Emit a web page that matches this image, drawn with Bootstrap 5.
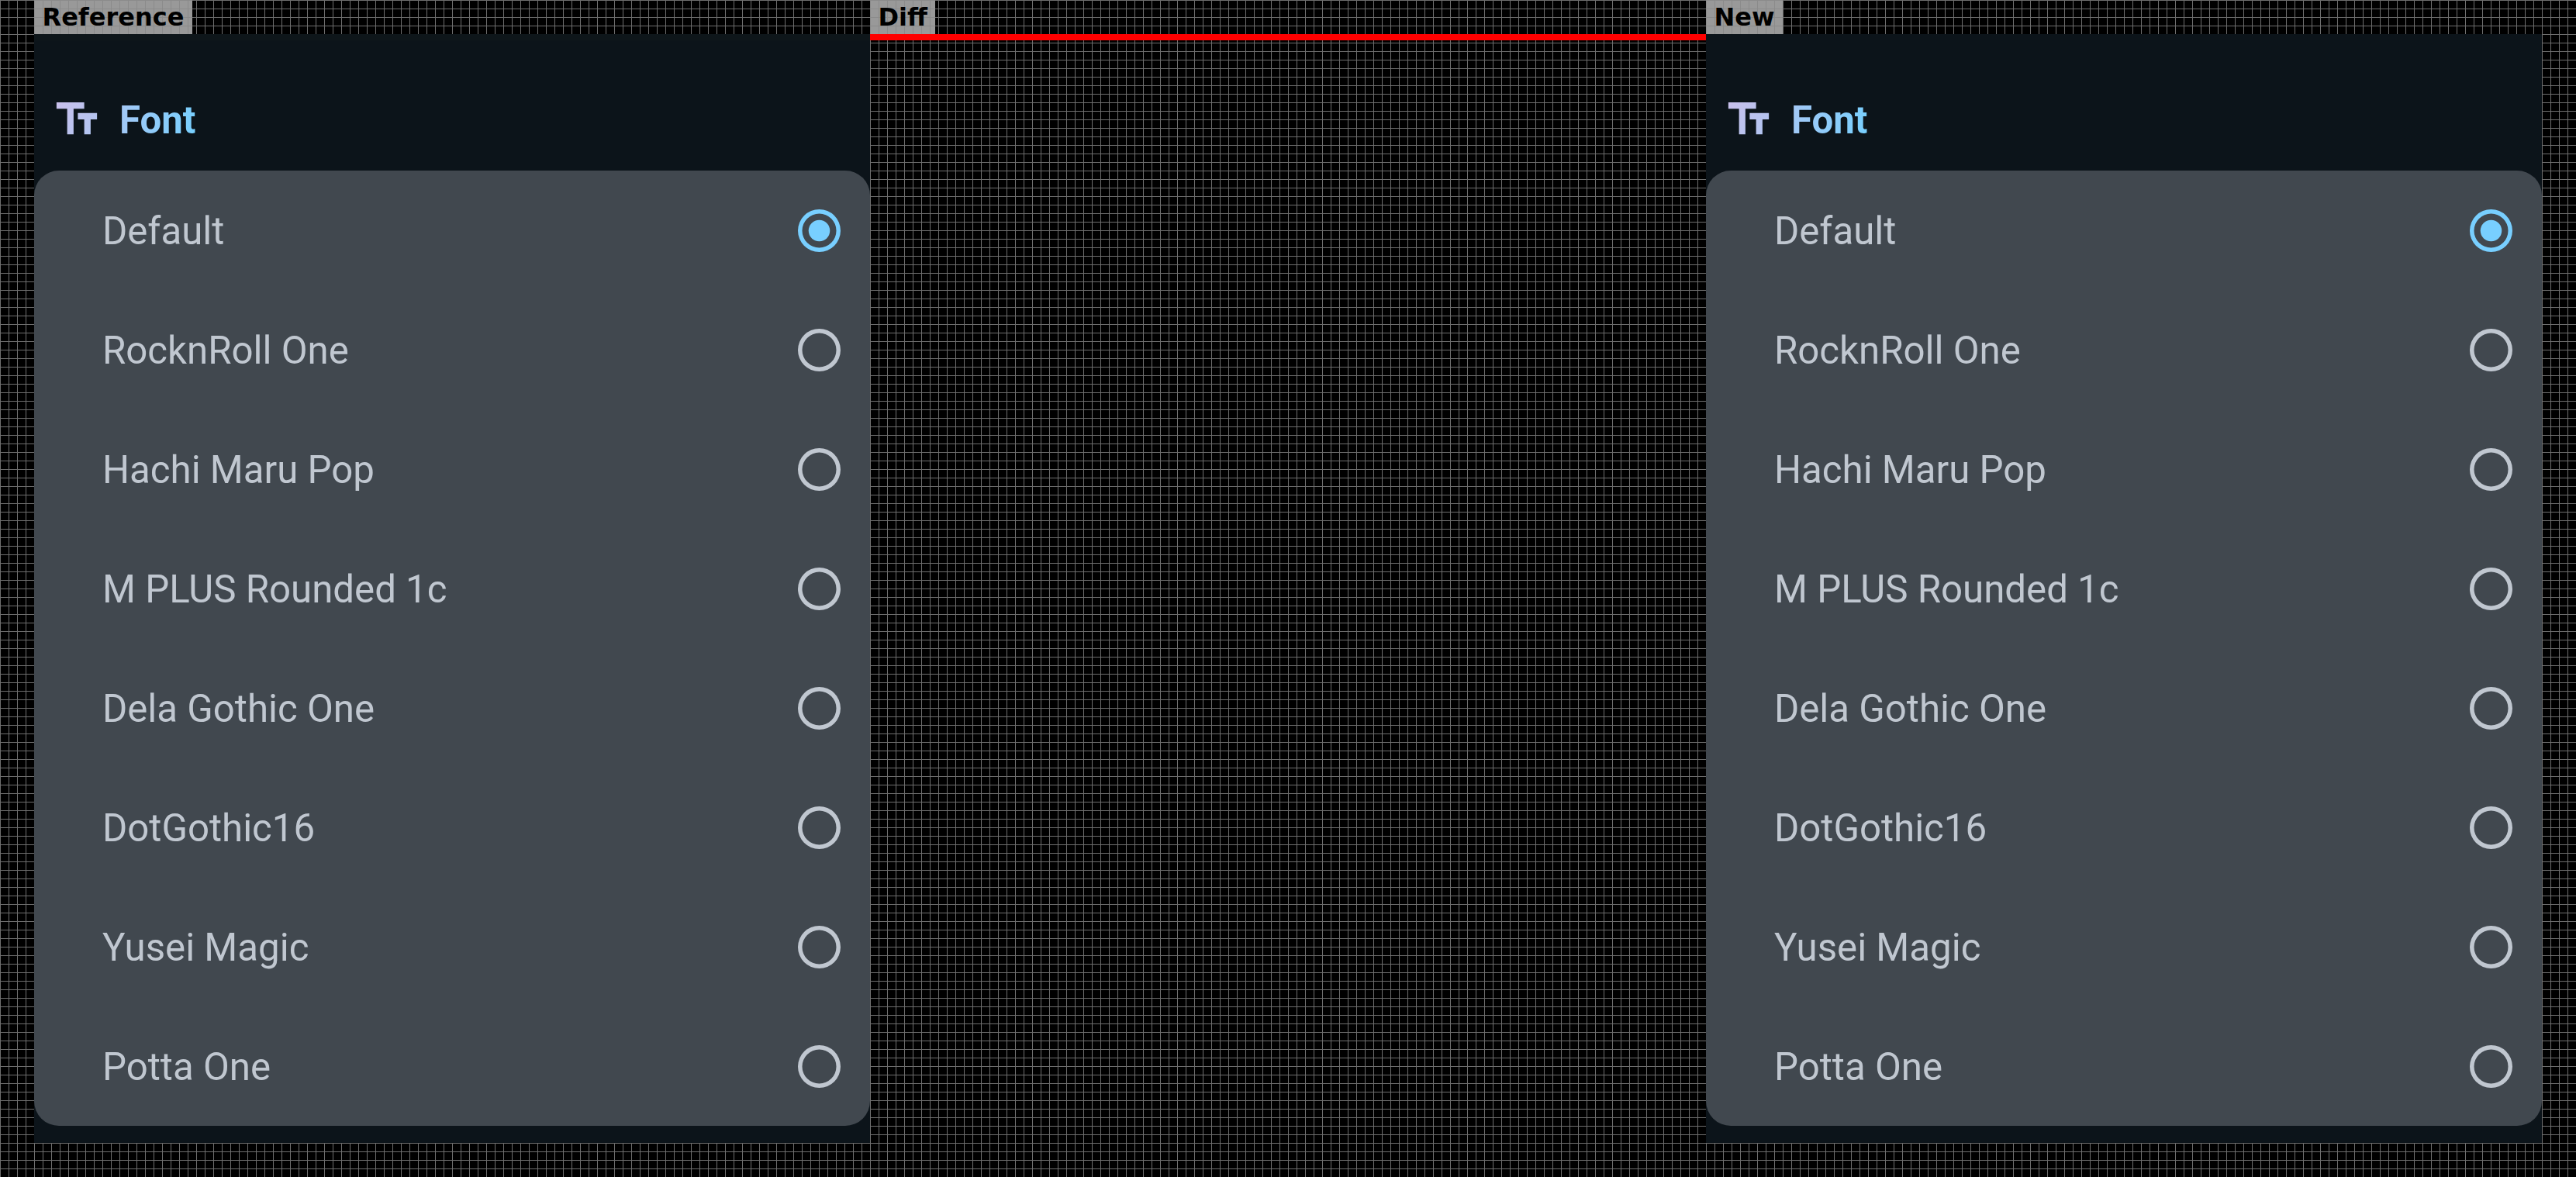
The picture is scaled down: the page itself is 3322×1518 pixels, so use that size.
<!DOCTYPE html>
<html lang="en">
<head>
    <meta charset="UTF-8">
    <meta name="viewport" content="width=device-width, initial-scale=1.0">
    <title>Font settings comparison</title>
    <link href="https://cdn.jsdelivr.net/npm/bootstrap@5.3.3/dist/css/bootstrap.min.css" rel="stylesheet">
    <style>
        /* 11px grid behind everything */
        body {
            background-color: #000;
            background-image:
                linear-gradient(to right, #6e6e6e 1px, transparent 1px),
                linear-gradient(to bottom, #6e6e6e 1px, transparent 1px);
            background-size: 11px 11px;
            min-height: 1518px;
            overflow: hidden;
        }
        .compare-wrap {
            padding: 0 44px;
        }
        .compare-col {
            width: 1078px;
            height: 1474px;
        }
        .tag-label {
            height: 44px;
            padding: 0 10.5px;
            color: #000;
            font-family: "DejaVu Sans", sans-serif;
            font-weight: 700;
            font-size: 32px;
            line-height: 44px;
            background-color: #999;
            background-image:
                linear-gradient(to right, #8b8b8b 1px, transparent 1px),
                linear-gradient(to bottom, #8b8b8b 1px, transparent 1px);
            background-size: 11px 11px;
        }
        .diff-bar {
            height: 8px;
            background: #f00;
        }
        .phone-panel {
            background: #0c141a;
            padding-top: 77px;
            font-family: Roboto, sans-serif;
        }
        .panel-strip {
            border-top: 8px solid #0e161a;
            padding-top: 69px;
        }
        .panel-title {
            height: 66px;
            margin: 0 0 33px 22px;
            gap: 22px;
        }
        .title-icon {
            width: 66px;
            height: 66px;
        }
        .title-text {
            font-size: 49.2px;
            font-weight: 700;
            line-height: 66px;
            padding-top: 2px;
            background: linear-gradient(100deg, #a6c8f5, #76cffe);
            -webkit-background-clip: text;
            background-clip: text;
            color: transparent;
        }
        .font-list {
            height: 1232px;
            background: #41484f;
            border-radius: 32px;
            overflow: hidden;
        }
        .font-row {
            height: 154px;
            padding: 0 38px 0 88px;
            color: #c0c7d0;
            font-size: 49.2px;
        }
        .font-name {
            padding-top: 3px;
        }
        /* ring is an inset shadow: browsers floor a 5.5px border to 5px */
        .font-radio.form-check-input {
            width: 55px;
            height: 55px;
            margin: 0;
            flex-shrink: 0;
            background-color: transparent;
            border: 0;
            box-shadow: inset 0 0 0 5.5px #c0c7d0;
        }
        .font-radio.form-check-input:checked {
            background-color: transparent;
            box-shadow: inset 0 0 0 5.5px #78cfff;
            --bs-form-check-bg-image: url("data:image/svg+xml,%3csvg xmlns='http://www.w3.org/2000/svg' viewBox='0 0 55 55'%3e%3ccircle cx='27.5' cy='27.5' r='13.75' fill='%2378cfff'/%3e%3c/svg%3e");
        }
    </style>
</head>
<body>
    <div class="compare-wrap d-flex">
        <!-- Reference -->
        <div class="compare-col d-flex flex-column">
            <div class="tag-label align-self-start">Reference</div>
            <div class="phone-panel panel-strip flex-grow-1">
                <div class="panel-title d-flex align-items-center">
                    <svg class="title-icon" viewBox="0 0 24 24">
                        <defs>
                            <linearGradient id="iconFillA" x1="2.5" y1="4" x2="21.5" y2="19" gradientUnits="userSpaceOnUse">
                                <stop offset="0" stop-color="#c9c0ec"/>
                                <stop offset="1" stop-color="#b0c5f1"/>
                            </linearGradient>
                        </defs>
                        <path fill="url(#iconFillA)" d="M2.5 4v3h5v12h3V7h5V4h-13zm19 5h-9v3h3v7h3v-7h3V9z"/>
                    </svg>
                    <span class="title-text">Font</span>
                </div>
                <div class="font-list">
                    <label class="font-row d-flex align-items-center justify-content-between"><span class="font-name">Default</span><input class="form-check-input font-radio" type="radio" name="fontA" checked></label>
                    <label class="font-row d-flex align-items-center justify-content-between"><span class="font-name">RocknRoll One</span><input class="form-check-input font-radio" type="radio" name="fontA"></label>
                    <label class="font-row d-flex align-items-center justify-content-between"><span class="font-name">Hachi Maru Pop</span><input class="form-check-input font-radio" type="radio" name="fontA"></label>
                    <label class="font-row d-flex align-items-center justify-content-between"><span class="font-name">M PLUS Rounded 1c</span><input class="form-check-input font-radio" type="radio" name="fontA"></label>
                    <label class="font-row d-flex align-items-center justify-content-between"><span class="font-name">Dela Gothic One</span><input class="form-check-input font-radio" type="radio" name="fontA"></label>
                    <label class="font-row d-flex align-items-center justify-content-between"><span class="font-name">DotGothic16</span><input class="form-check-input font-radio" type="radio" name="fontA"></label>
                    <label class="font-row d-flex align-items-center justify-content-between"><span class="font-name">Yusei Magic</span><input class="form-check-input font-radio" type="radio" name="fontA"></label>
                    <label class="font-row d-flex align-items-center justify-content-between"><span class="font-name">Potta One</span><input class="form-check-input font-radio" type="radio" name="fontA"></label>
                </div>
            </div>
        </div>

        <!-- Diff -->
        <div class="compare-col d-flex flex-column">
            <div class="tag-label align-self-start">Diff</div>
            <div class="diff-bar"></div>
        </div>

        <!-- New -->
        <div class="compare-col d-flex flex-column">
            <div class="tag-label align-self-start">New</div>
            <div class="phone-panel flex-grow-1">
                <div class="panel-title d-flex align-items-center">
                    <svg class="title-icon" viewBox="0 0 24 24">
                        <defs>
                            <linearGradient id="iconFillB" x1="2.5" y1="4" x2="21.5" y2="19" gradientUnits="userSpaceOnUse">
                                <stop offset="0" stop-color="#c9c0ec"/>
                                <stop offset="1" stop-color="#b0c5f1"/>
                            </linearGradient>
                        </defs>
                        <path fill="url(#iconFillB)" d="M2.5 4v3h5v12h3V7h5V4h-13zm19 5h-9v3h3v7h3v-7h3V9z"/>
                    </svg>
                    <span class="title-text">Font</span>
                </div>
                <div class="font-list">
                    <label class="font-row d-flex align-items-center justify-content-between"><span class="font-name">Default</span><input class="form-check-input font-radio" type="radio" name="fontB" checked></label>
                    <label class="font-row d-flex align-items-center justify-content-between"><span class="font-name">RocknRoll One</span><input class="form-check-input font-radio" type="radio" name="fontB"></label>
                    <label class="font-row d-flex align-items-center justify-content-between"><span class="font-name">Hachi Maru Pop</span><input class="form-check-input font-radio" type="radio" name="fontB"></label>
                    <label class="font-row d-flex align-items-center justify-content-between"><span class="font-name">M PLUS Rounded 1c</span><input class="form-check-input font-radio" type="radio" name="fontB"></label>
                    <label class="font-row d-flex align-items-center justify-content-between"><span class="font-name">Dela Gothic One</span><input class="form-check-input font-radio" type="radio" name="fontB"></label>
                    <label class="font-row d-flex align-items-center justify-content-between"><span class="font-name">DotGothic16</span><input class="form-check-input font-radio" type="radio" name="fontB"></label>
                    <label class="font-row d-flex align-items-center justify-content-between"><span class="font-name">Yusei Magic</span><input class="form-check-input font-radio" type="radio" name="fontB"></label>
                    <label class="font-row d-flex align-items-center justify-content-between"><span class="font-name">Potta One</span><input class="form-check-input font-radio" type="radio" name="fontB"></label>
                </div>
            </div>
        </div>
    </div>
    <script src="https://cdn.jsdelivr.net/npm/bootstrap@5.3.3/dist/js/bootstrap.bundle.min.js"></script>
</body>
</html>
